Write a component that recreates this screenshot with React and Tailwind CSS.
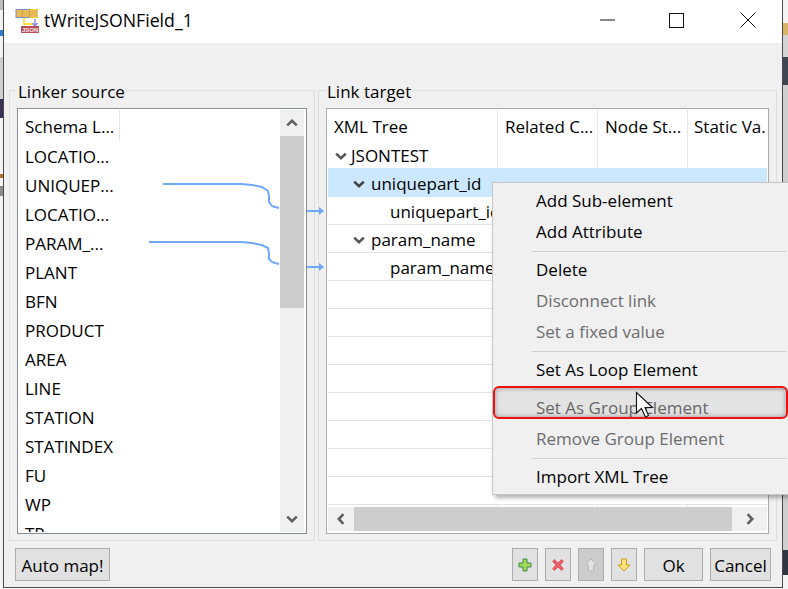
import React from "react";

const leftRows = ["LOCATIO...","UNIQUEP...","LOCATIO...","PARAM_...","PLANT","BFN","PRODUCT","AREA","LINE","STATION","STATINDEX","FU","WP","TP"];

function Btn({ className, children }) {
  return <div className={"h-[33px] pt-[1px] flex items-center justify-center border border-[#adadad] bg-[#e1e1e1] text-black " + className}>{children}</div>;
}

function MenuItem({ label, disabled }) {
  return (
    <div className={"h-[31px] pb-[2px] flex items-center pl-[43px] " + (disabled ? "text-[#6d6d6d]" : "text-black")}>{label}</div>
  );
}
function MenuSep() {
  return <div className="h-[7px] flex items-center pl-[39px] pr-[2px]"><div className="h-px w-full bg-[#d0d0d0]" /></div>;
}

function Chev({ rot = 0, color = "#606060" }) {
  return (
    <svg width="12" height="12" viewBox="0 0 12 12" style={{ transform: `rotate(${rot}deg)` }} className="shrink-0">
      <path d="M1.2 3.6L6 8.2L10.8 3.6" fill="none" stroke={color} strokeWidth="2.6" />
    </svg>
  );
}

export default function App() {
  return (
    <div className="relative w-[788px] h-[589px] overflow-hidden flex bg-white text-[17px] leading-none text-black" style={{ fontFamily: '"Open Sans", "Noto Sans", sans-serif' }}>
      {/* desktop behind, left edge */}
      <div className="w-[3px] flex flex-col bg-[#f4f4f4]">
        <div className="h-[10px] bg-[#bdbdbd]" />
        <div className="h-[20px]" />
        <div className="h-[6px] bg-[#2f7fd0]" />
        <div className="h-[21px]" />
        <div className="h-[42px] bg-[#cfcfcf]" />
        <div className="h-[19px] bg-[#3a2f55]" />
        <div className="h-[56px]" />
        <div className="h-[4px] bg-[#b5702a]" />
        <div className="h-[8px]" />
        <div className="h-[10px] bg-[#8a8a8a]" />
      </div>
      {/* window */}
      <div className="w-[780px] h-[588px] border-l border-r border-b border-[#4a4a4a] flex flex-col bg-[#f0f0f0] shrink-0">
        {/* title bar */}
        <div className="h-[43px] bg-white flex items-center shrink-0">
          <svg width="24" height="24" viewBox="0 0 24 24" className="ml-[11px] mt-[-1px]">
            <rect x="1" y="0.5" width="21" height="8" fill="#e9b85a" stroke="#7f93b5" />
            <path d="M7.5 1v7M14.5 1v7" stroke="#c9a23a" fill="none" />
            <path d="M15 0.5h7v8h-7" stroke="#f0d020" fill="none" />
            <path d="M9 9v6h9" stroke="#f2d800" strokeWidth="1.3" fill="none" />
            <path d="M20 10v6M17.5 14l2.5 3 2.5-3" stroke="#8a8ae0" strokeWidth="1.4" fill="none" />
            <rect x="6" y="17" width="18" height="7" fill="#b5505a" />
            <text x="7" y="23" fontSize="6" fontWeight="700" fill="#f6e6e6" style={{ fontFamily: '"Liberation Sans", sans-serif' }}>JSON</text>
          </svg>
          <span className="ml-[5px] mt-[-1px] text-[17.7px]">tWriteJSONField_1</span>
          <div className="ml-auto flex items-center mt-[-3px]">
            <svg width="15" height="2" className="mr-[54px]"><rect width="15" height="1" y="0.5" fill="#111" /></svg>
            <svg width="15" height="15" className="mr-[56px]"><rect x="0.5" y="0.5" width="14" height="14" fill="none" stroke="#111" /></svg>
            <svg width="16" height="16" className="mr-[26px]"><path d="M.5.5l15 15M15.5.5l-15 15" stroke="#111" fill="none" /></svg>
          </div>
        </div>

        {/* panels */}
        <div className="flex gap-[3px] pl-[5px] pt-[47px]">
          {/* Linker source */}
          <fieldset className="relative w-[306px] h-[451px] border border-[#dedede]">
            <legend className="absolute left-[7px] top-[-9px] bg-[#f0f0f0] px-[1px] leading-[20px]">Linker source</legend>
            <div className="ml-[7px] mt-[17px] w-[290px] h-[426px] border border-[#8a8f96] bg-white p-px flex">
              <div className="w-[261px] overflow-hidden">
                <div className="h-[31px] flex items-center">
                  <div className="w-[101px] h-[31px] flex items-center pl-[6px] pt-[2px] border-r border-[#e6e6e6]">Schema L...</div>
                </div>
                {leftRows.map((r, i) => (
                  <div key={i} className="h-[29px] pt-[1px] flex items-center pl-[6px]">{r}</div>
                ))}
              </div>
              <div className="w-[24px] flex flex-col bg-[#f0f0f0]">
                <div className="h-[26px] flex items-center justify-center"><Chev rot={180} /></div>
                <div className="h-[172px] bg-[#cdcdcd]" />
                <div className="flex-1" />
                <div className="h-[26px] flex items-center justify-center"><Chev /></div>
              </div>
            </div>
          </fieldset>

          {/* Link target */}
          <fieldset className="relative w-[459px] h-[451px] border border-[#dedede]">
            <legend className="absolute left-[7px] top-[-9px] bg-[#f0f0f0] px-[1px] leading-[20px]">Link target</legend>
            <div className="ml-[7px] mt-[17px] w-[443px] h-[426px] border border-[#a9adb3] bg-white p-px flex flex-col">
              <div className="flex-1 flex flex-col overflow-hidden">
                <div className="flex h-[31px] shrink-0">
                  <div className="w-[170px] flex items-center pl-[6px] pt-[2px] border-r border-[#e6e6e6]">XML Tree</div>
                  <div className="w-[100px] flex items-center pl-[7px] pt-[2px] border-r border-[#e6e6e6]">Related C...</div>
                  <div className="w-[90px] flex items-center pl-[7px] pt-[2px] border-r border-[#e6e6e6]">Node St...</div>
                  <div className="flex-1 flex items-center pl-[6px] pt-[2px] whitespace-nowrap overflow-hidden">Static Va..</div>
                </div>
                <div className="flex h-[27px] shrink-0">
                  <div className="w-[170px] flex items-center pl-[7px] pt-[2px] gap-[4px] border-r border-[#e6e6e6]"><Chev color="#555555" />JSONTEST</div>
                  <div className="w-[100px] border-r border-[#e6e6e6]" />
                  <div className="w-[90px] border-r border-[#e6e6e6]" />
                </div>
                <div className="flex items-center h-[29px] shrink-0 bg-[#cce8ff] pl-[25px] pt-[2px] gap-[6px]"><Chev color="#444444" />uniquepart_id</div>
                <div className="flex items-center h-[28px] shrink-0 border-b border-[#e3e3e3] pl-[62px] pt-[2px]">uniquepart_id</div>
                <div className="flex items-center h-[28px] shrink-0 border-b border-[#e3e3e3] pl-[25px] pt-[2px] gap-[6px]"><Chev color="#555555" />param_name</div>
                <div className="flex items-center h-[28px] shrink-0 border-b border-[#e3e3e3] pl-[62px] pt-[2px]">param_name</div>
                {[0,1,2,3,4,5,6,7].map((i) => (
                  <div key={i} className="h-[28px] shrink-0 border-b border-[#e3e3e3]" />
                ))}
                <div className="flex flex-1">
                  <div className="w-[170px] border-r border-[#e6e6e6]" />
                  <div className="w-[100px] border-r border-[#e6e6e6]" />
                  <div className="w-[90px] border-r border-[#e6e6e6]" />
                </div>
              </div>
              <div className="h-[24px] mb-[1px] flex bg-[#f0f0f0] shrink-0">
                <div className="w-[26px] flex items-center justify-center"><Chev rot={90} /></div>
                <div className="flex-1 bg-[#cdcdcd]" />
                <div className="w-[35px] flex items-center justify-center"><Chev rot={-90} /></div>
              </div>
            </div>
          </fieldset>
        </div>

        {/* buttons */}
        <div className="flex items-center mt-[7px] pl-[11px] pr-[11px]">
          <Btn className="w-[95px]">Auto map!</Btn>
          <div className="ml-auto flex gap-[7px]">
            <Btn className="w-[26px]">
              <svg width="14" height="14" viewBox="0 0 14 14"><path d="M5 1h4v4h4v4H9v4H5V9H1V5h4z" fill="#a5d957" stroke="#3d8a4a" /></svg>
            </Btn>
            <Btn className="w-[26px]">
              <svg width="14" height="14" viewBox="0 0 14 14"><path d="M1.5 3.5l2-2L7 5l3.500-3.500 2 2L9 7l3.500 3.500-2 2L7 9l-3.500 3.500-2-2L5 7z" fill="#ea5f6a" stroke="#d9606a" /></svg>
            </Btn>
            <Btn className="w-[26px] !bg-[#cccccc]">
              <svg width="14" height="14" viewBox="0 0 14 14"><path d="M7 1l6 6H9.500v6h-5V7H1z" fill="#e2e2e2" stroke="#b8b8b8" /></svg>
            </Btn>
            <Btn className="w-[26px]">
              <svg width="14" height="14" viewBox="0 0 14 14"><path d="M4.500 1h5v6H13l-6 6-6-6h3.500z" fill="#ffe27a" stroke="#d19a1c" /></svg>
            </Btn>
            <Btn className="w-[59px]">Ok</Btn>
            <Btn className="w-[61px]">Cancel</Btn>
          </div>
        </div>
      </div>
      {/* desktop behind, right edge */}
      <div className="flex-1 flex flex-col bg-[#cfcfcf]">
        <div className="h-[23px] bg-[#f4f4f4]" />
        <div className="h-[12px] bg-[#d9b56a]" />
        <div className="h-[22px] bg-[#d4d4d4]" />
        <div className="h-[28px] bg-[#3f4552]" />
        <div className="h-[465px]" />
        <div className="h-[25px] bg-[#2f3542]" />
        <div className="flex-1 bg-[#f4f4f4]" />
      </div>

      {/* link lines */}
      <svg width="788" height="589" className="absolute left-0 top-0 pointer-events-none">
        <g fill="none" stroke="#6ea8ff" strokeWidth="2">
          <path d="M163 184H241L252 185L262 187L268 191L269 196V202L272 206L275 207L279 208" />
          <path d="M149 242H241L252 243L262 245L268 248L269 253V259L272 262L275 263L279 264" />
          <path d="M307 211H319M307 267H319" />
        </g>
        <path d="M319 207l5 4-5 4zM319 263l5 4-5 4z" fill="#6ea8ff" />
      </svg>

      {/* context menu */}
      <div className="absolute left-[492px] top-[182px] w-[296px] h-[313px] border-l border-t border-b border-[#c6c6c6] bg-[#f0f0f0] py-[3px] shadow-[3px_3px_4px_rgba(0,0,0,0.3)]">
        <MenuItem label="Add Sub-element" />
        <MenuItem label="Add Attribute" />
        <MenuSep />
        <MenuItem label="Delete" />
        <MenuItem label="Disconnect link" disabled />
        <MenuItem label="Set a fixed value" disabled />
        <MenuSep />
        <MenuItem label="Set As Loop Element" />
        <MenuSep />
        <MenuItem label="Set As Group Element" disabled />
        <MenuItem label="Remove Group Element" disabled />
        <MenuSep />
        <MenuItem label="Import XML Tree" />
      </div>

      {/* highlight */}
      <div className="absolute left-[493px] top-[386px] w-[295px] h-[33px] rounded-[6px] border-2 border-[#f01010] bg-[rgba(0,0,0,0.05)] shadow-[inset_0_0_5px_rgba(0,0,0,0.35)]" />

      {/* cursor */}
      <svg width="20" height="28" viewBox="0 0 20 28" className="absolute left-[635px] top-[391px]">
        <path d="M1.500 1.500V22L6.500 17.500L10.500 26L13.500 24.500L10 16.500H17.500Z" fill="#fff" stroke="#111" strokeWidth="1.100" />
      </svg>
    </div>
  );
}
